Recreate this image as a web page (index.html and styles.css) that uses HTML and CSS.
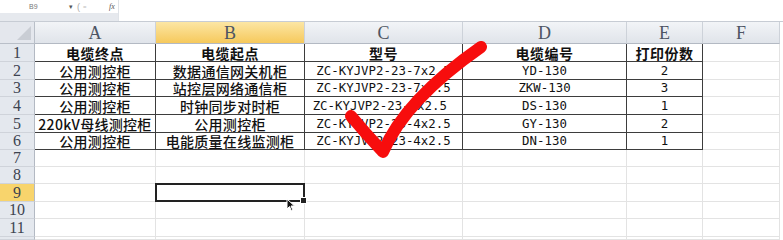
FILE: index.html
```html
<!DOCTYPE html>
<html lang="zh">
<head>
<meta charset="utf-8">
<link rel="stylesheet" href="styles.css">
</head>
<body>
<div class="topbar">
  <div class="namepane">
    <div class="nb-row"><span class="name">B9</span><span class="dd">▾</span><span class="paren">(</span><span class="eq">=</span><span class="fx">fx</span></div>
    <div class="nb-band"></div>
  </div>
  <div class="formula"></div>
</div>
<div class="sheet">
  <div class="corner"><span class="tri"></span></div>
  <div class="ch">A</div><div class="ch sel">B</div><div class="ch">C</div><div class="ch">D</div><div class="ch">E</div><div class="ch">F</div><div class="edge"></div>

  <div class="rh">1</div>
  <div class="c t b">电缆终点</div><div class="c t b">电缆起点</div><div class="c t b">型号</div><div class="c t b">电缆编号</div><div class="c t b">打印份数</div><div class="c"></div><div class="edge"></div>

  <div class="rh">2</div>
  <div class="c t">公用测控柜</div><div class="c t">数据通信网关机柜</div><div class="c t m">ZC-KYJVP2-23-7x2.5</div><div class="c t m">YD-130</div><div class="c t m">2</div><div class="c"></div><div class="edge"></div>

  <div class="rh">3</div>
  <div class="c t">公用测控柜</div><div class="c t">站控层网络通信柜</div><div class="c t m">ZC-KYJVP2-23-7x2.5</div><div class="c t m">ZKW-130</div><div class="c t m">3</div><div class="c"></div><div class="edge"></div>

  <div class="rh">4</div>
  <div class="c t">公用测控柜</div><div class="c t">时钟同步对时柜</div><div class="c t m">ZC-KYJVP2-23-4x2.5 </div><div class="c t m">DS-130</div><div class="c t m">1</div><div class="c"></div><div class="edge"></div>

  <div class="rh">5</div>
  <div class="c t">220kV母线测控柜</div><div class="c t">公用测控柜</div><div class="c t m">ZC-KYJVP2-23-4x2.5</div><div class="c t m">GY-130</div><div class="c t m">2</div><div class="c"></div><div class="edge"></div>

  <div class="rh">6</div>
  <div class="c t">公用测控柜</div><div class="c t">电能质量在线监测柜</div><div class="c t m">ZC-KYJVP2-23-4x2.5</div><div class="c t m">DN-130</div><div class="c t m">1</div><div class="c"></div><div class="edge"></div>

  <div class="rh">7</div>
  <div class="c"></div><div class="c"></div><div class="c"></div><div class="c"></div><div class="c"></div><div class="c"></div><div class="edge"></div>

  <div class="rh">8</div>
  <div class="c"></div><div class="c"></div><div class="c"></div><div class="c"></div><div class="c"></div><div class="c"></div><div class="edge"></div>

  <div class="rh sel">9</div>
  <div class="c"></div><div class="c active"></div><div class="c"></div><div class="c"></div><div class="c"></div><div class="c"></div><div class="edge"></div>

  <div class="rh">10</div>
  <div class="c"></div><div class="c"></div><div class="c"></div><div class="c"></div><div class="c"></div><div class="c"></div><div class="edge"></div>

  <div class="rh">11</div>
  <div class="c"></div><div class="c"></div><div class="c"></div><div class="c"></div><div class="c"></div><div class="c"></div><div class="edge"></div>

  <div class="rh"></div>
  <div class="c"></div><div class="c"></div><div class="c"></div><div class="c"></div><div class="c"></div><div class="c"></div><div class="edge"></div>
</div>

<svg class="cursor" width="10" height="14" viewBox="0 0 10 14">
  <path d="M1,1 L1,11 L3.5,8.5 L5.5,13 L7,12.3 L5,8 L8.5,8 Z" fill="#111" stroke="#fff" stroke-width="1"/>
</svg>

<svg class="check" width="783" height="240" viewBox="0 0 783 240">
  <path d="M351,116 Q366,134 383,152 Q405,100 481,47" fill="none" stroke="#f70d0d" stroke-width="12" stroke-linecap="round" stroke-linejoin="round"/>
</svg>
</body>
</html>
```

FILE: styles.css
```css
* {
  box-sizing: border-box;
}

body {
  margin: 0;
  width: 783px;
  height: 240px;
  overflow: hidden;
  background: #ffffff;
  position: relative;
  font-family: "Noto Sans CJK SC", "Noto Sans", sans-serif;
}

.topbar {
  display: flex;
  height: 22px;
  border-bottom: 1px solid #c7ccd4;
}

.namepane {
  width: 119px;
  display: flex;
  flex-direction: column;
  border-right: 1px solid #dfe3e8;
}

.nb-row {
  height: 13px;
  display: flex;
  align-items: center;
  padding-left: 29px;
  font-family: "Liberation Sans", sans-serif;
  font-size: 7px;
  color: #777;
}

.name {
  width: 40px;
}

.dd {
  width: 8px;
  font-size: 7px;
  color: #555;
}

.paren {
  width: 6px;
  color: #aaa;
  font-size: 9px;
}

.eq {
  width: 26px;
  color: #bbb;
  font-size: 6px;
}

.fx {
  font-style: italic;
  font-family: "Liberation Serif", serif;
  font-size: 8px;
  color: #555;
}

.nb-band {
  flex: 1;
  background: #e6e9ee;
}

.formula {
  flex: 1;
  background: #ffffff;
}

.sheet {
  display: grid;
  grid-template-columns: 35px 121px 149px 158px 164px 76px 77px 3px;
  grid-template-rows: 22px 18px 18px 17px 18px 18px 17px 17px 17px 18px 17px 18px 3px;
  overflow: hidden;
}

.corner {
  background: #e4e7ed;
  border-right: 1px solid #b9bfc8;
  border-bottom: 1px solid #b9bfc8;
  display: flex;
  justify-content: flex-end;
  align-items: flex-end;
  padding: 0 3px 3px 0;
}

.tri {
  width: 0;
  height: 0;
  border-left: 14px solid transparent;
  border-bottom: 14px solid #c9cdd4;
}

.ch {
  background: linear-gradient(#f2f4f7, #e0e4ea);
  border-right: 1px solid #cdd2d9;
  border-bottom: 1px solid #b3b9c3;
  display: flex;
  align-items: center;
  justify-content: center;
  font-family: "Liberation Serif", serif;
  font-size: 18px;
  line-height: 20px;
  color: #4d5563;
}

.ch.sel {
  background: linear-gradient(#fce6a4, #f6c95c);
}

.edge {
  background: #ffffff;
}

.rh {
  background: #e4e8ee;
  border-right: 1px solid #b3b9c3;
  border-bottom: 1px solid #cfd3da;
  display: flex;
  align-items: center;
  justify-content: center;
  font-family: "Liberation Serif", serif;
  font-size: 16px;
  line-height: 16px;
  color: #3c4350;
}

.rh.sel {
  background: #f8d46c;
}

.c {
  border-right: 1px solid #e3e3e3;
  border-bottom: 1px solid #e3e3e3;
  display: flex;
  align-items: center;
  justify-content: center;
  font-size: 14px;
  line-height: 16px;
  font-weight: 500;
  letter-spacing: 0.3px;
  color: #111;
  white-space: pre;
}

.c.t {
  border-right-color: #3d3d3d;
  border-bottom-color: #3d3d3d;
}

.c.b {
  font-weight: 700;
  letter-spacing: 0.5px;
}

.c.m {
  font-family: "DejaVu Sans Mono", "Liberation Mono", monospace;
  font-size: 12.4px;
  font-weight: 400;
  letter-spacing: 0;
  color: #111;
}

.c.active {
  position: relative;
}

.c.active::after {
  content: "";
  position: absolute;
  left: -1px;
  top: -1px;
  right: -1px;
  bottom: -1px;
  border: 2px solid #222;
}

.c.active::before {
  content: "";
  position: absolute;
  right: -3px;
  bottom: -3px;
  width: 5px;
  height: 5px;
  background: #222;
  border: 1px solid #fff;
  z-index: 1;
}

.cursor {
  position: absolute;
  left: 286px;
  top: 198px;
}

.check {
  position: absolute;
  left: 0;
  top: 0;
  pointer-events: none;
}
```
